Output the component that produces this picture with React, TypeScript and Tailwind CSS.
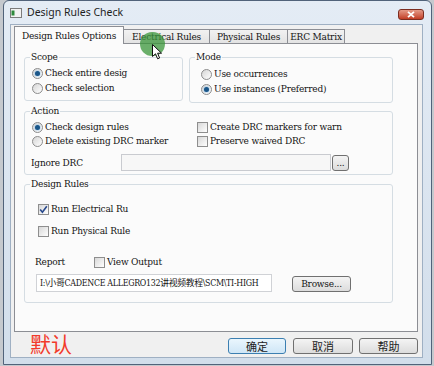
import React from "react";

const serif =
  "font-['DejaVu_Serif_Condensed','DejaVu_Serif','Noto_Sans_CJK_SC',serif] font-stretch-condensed text-[#141414] whitespace-nowrap";
const mono = `${serif} text-[10px] leading-[12px] tracking-[-0.2px]`;
const pathText = `${serif} text-[8.8px] leading-[12px] tracking-[-0.3px]`;
const cjk = "font-['Noto_Sans_CJK_SC',sans-serif]";

function Radio({ checked }: { checked?: boolean }) {
  return (
    <span className="w-[11px] h-[11px] shrink-0 rounded-full border border-[#8c8c8c] bg-linear-to-br from-[#d6d6d6] to-white flex items-center justify-center">
      {checked && <span className="w-[5px] h-[5px] rounded-full bg-[#1b5688] shadow-[0_0_2px_#5aa8e6]" />}
    </span>
  );
}

function Check({ checked }: { checked?: boolean }) {
  return (
    <span className="w-[11px] h-[11px] shrink-0 border border-[#8e8e8e] bg-linear-to-br from-[#d8d8d8] to-white flex items-center justify-center">
      {checked && (
        <svg width="9" height="9" viewBox="0 0 9 9">
          <path d="M1.2 4.6 L3.4 7.2 L7.8 1.2" fill="none" stroke="#27488c" strokeWidth="1.6" />
        </svg>
      )}
    </span>
  );
}

function RadioRow({ label, checked, className = "" }: { label: string; checked?: boolean; className?: string }) {
  return (
    <div className={`h-[14px] flex items-center gap-[2px] ${className}`}>
      <Radio checked={checked} />
      <span className={mono}>{label}</span>
    </div>
  );
}

function CheckRow({ label, checked, className = "" }: { label: string; checked?: boolean; className?: string }) {
  return (
    <div className={`h-[14px] flex items-center gap-[2px] ${className}`}>
      <Check checked={checked} />
      <span className={mono}>{label}</span>
    </div>
  );
}

function Group({ title, className = "", children }: { title: string; className?: string; children: React.ReactNode }) {
  return (
    <fieldset className={`border border-[#d5dde3] rounded-[3px] pl-[5px] ${className}`}>
      <legend className={`px-[1px] ${mono}`}>{title}</legend>
      {children}
    </fieldset>
  );
}

function WinButton({ children, primary, className = "" }: { children: React.ReactNode; primary?: boolean; className?: string }) {
  return (
    <button
      className={`h-[16px] rounded-[3px] border flex items-center justify-center ${
        primary
          ? "border-[#3c7fb1] bg-linear-to-b from-[#eaf6fd] to-[#cfe6f6]"
          : "border-[#707070] bg-linear-to-b from-[#f4f4f4] to-[#dcdcdc]"
      } ${className}`}
    >
      {children}
    </button>
  );
}

export default function App() {
  return (
    <div className="w-[434px] h-[366px] bg-[#c5c9ce] overflow-hidden relative">
      <div className="ml-[3px] w-[429px] h-[365px] border border-[#51637a] rounded-t-[6px] bg-linear-to-b from-[#e4ecf5] to-[#d2deeb] flex flex-col">
        {/* title bar */}
        <div className="h-[23px] flex items-center pl-[6px] pr-[7px]">
          <svg width="12" height="10" viewBox="0 0 12 10">
            <rect x="0.5" y="0.5" width="11" height="9" fill="#f2f2f2" stroke="#7c7c7c" />
            <rect x="1.5" y="2.5" width="3" height="5" fill="#2e8a3c" />
          </svg>
          <span className="ml-[5px] font-['Noto_Sans',sans-serif] text-[10.5px] text-[#1e1e1e]">Design Rules Check</span>
          <div className="ml-auto self-start mt-[8px] w-[26px] h-[11px] rounded-[3px] border border-[#7b2d20] bg-linear-to-b from-[#e49a88] to-[#c13c24] flex items-center justify-center">
            <svg width="8" height="7" viewBox="0 0 8 7">
              <path d="M1 0.8 L7 6.2 M7 0.8 L1 6.2" stroke="#fff" strokeWidth="1.8" />
            </svg>
          </div>
        </div>

        {/* client area */}
        <div className="ml-[6px] w-[413px] flex-1 border border-[#9fb0c3] bg-[#f0f0f0] flex flex-col">
          {/* tabs */}
          <div className="h-[17px] mt-[1px] ml-[3px] flex items-end">
            <div className={`relative z-10 -mb-px w-[110px] h-[18px] border border-b-0 border-[#8c8e94] bg-[#fbfbfb] flex items-center justify-center pt-[1px] ${mono}`}>
              Design Rules Options
            </div>
            <div className={`w-[87px] h-[14px] -ml-px border border-b-0 border-[#8c8e94] bg-linear-to-b from-[#f2f2f2] to-[#e3e3e3] flex items-center justify-center ${mono}`}>
              Electrical Rules
            </div>
            <div className={`w-[79px] h-[14px] -ml-px border border-b-0 border-[#8c8e94] bg-linear-to-b from-[#f2f2f2] to-[#e3e3e3] flex items-center justify-center ${mono}`}>
              Physical Rules
            </div>
            <div className={`w-[58px] h-[14px] -ml-px border border-b-0 border-[#8c8e94] bg-linear-to-b from-[#f2f2f2] to-[#e3e3e3] flex items-center justify-center ${mono}`}>
              ERC Matrix
            </div>
          </div>

          {/* tab panel */}
          <div className="ml-[3px] w-[404px] h-[289px] border border-[#8c8e94] bg-[#fbfbfb] pt-[7px] pl-[9px]">
            <div className="flex items-start gap-[6px]">
              <Group title="Scope" className="w-[159px] pt-[3px] pb-[5px]">
                <div className="flex flex-col gap-[1px] ml-[2px]">
                  <RadioRow label="Check entire desig" checked />
                  <RadioRow label="Check selection" />
                </div>
              </Group>
              <Group title="Mode" className="w-[204px] pt-[4px] pb-[6px]">
                <div className="flex flex-col gap-[1px] ml-[6px]">
                  <RadioRow label="Use occurrences" />
                  <RadioRow label="Use instances (Preferred)" checked />
                </div>
              </Group>
            </div>

            <Group title="Action" className="w-[369px] mt-[2px] pt-[3px] pb-[3px]">
              <div className="flex flex-col ml-[2px]">
                <div className="flex">
                  <RadioRow label="Check design rules" checked className="w-[165px]" />
                  <CheckRow label="Create DRC markers for warn" />
                </div>
                <div className="flex">
                  <RadioRow label="Delete existing DRC marker" className="w-[165px]" />
                  <CheckRow label="Preserve waived DRC" />
                </div>
              </div>
              <div className="flex items-center mt-[6px] ml-[1px]">
                <span className={`w-[90px] ${mono}`}>Ignore DRC</span>
                <div className="w-[210px] h-[17px] border border-[#c9cbd0] bg-[#f7f7f7]" />
                <WinButton className="ml-[1px] w-[17px]">
                  <span className={`${mono} text-[#555] leading-[8px]`}>...</span>
                </WinButton>
              </div>
            </Group>

            <Group title="Design Rules" className="w-[369px] mt-[3px] pt-[12px] pb-[10px]">
              <CheckRow label="Run Electrical Ru" checked className="ml-[8px]" />
              <CheckRow label="Run Physical Rule" className="ml-[8px] mt-[8px]" />
              <div className="h-[14px] mt-[17px] ml-[5px] flex items-center">
                <span className={`w-[59px] ${mono}`}>Report</span>
                <CheckRow label="View Output" />
              </div>
              <div className="flex items-end mt-[5px] ml-[6px]">
                <div className="w-[236px] h-[18px] border border-[#d0d2d6] bg-white flex items-center pl-[3px] overflow-hidden">
                  <span className={pathText}>{"I:\\小哥CADENCE ALLEGRO132讲视频教程\\SCM\\TI-HIGH"}</span>
                </div>
                <WinButton className="ml-[20px] w-[59px]">
                  <span className={mono}>Browse...</span>
                </WinButton>
              </div>
            </Group>
          </div>

          {/* bottom row */}
          <div className="flex-1 flex items-start pl-[19px] pr-[4px]">
            <span className={`${cjk} text-[21px] leading-[21px] mt-[1px] text-[#f23a2a]`}>默认</span>
            <div className="ml-auto mt-[6px] flex">
              <WinButton primary className="w-[58px]">
                <span className={`${cjk} text-[11px] text-[#222]`}>确定</span>
              </WinButton>
              <WinButton className="ml-[7px] w-[60px]">
                <span className={`${cjk} text-[11px] text-[#222]`}>取消</span>
              </WinButton>
              <WinButton className="ml-[6px] w-[59px]">
                <span className={`${cjk} text-[11px] text-[#222]`}>帮助</span>
              </WinButton>
            </div>
          </div>
        </div>
        <div className="h-[6px]" />
      </div>

      {/* cursor highlight overlay */}
      <div className="absolute left-[140px] top-[32px] w-[25px] h-[24px] rounded-full bg-[rgba(58,150,58,0.75)]" />
      <svg className="absolute left-[152px] top-[44px]" width="11" height="16" viewBox="0 0 11 16">
        <path d="M0.5 0.5 L0.5 12.5 L3.5 9.8 L5.6 14.8 L7.6 14 L5.6 9.2 L9.5 9.2 Z" fill="#fff" stroke="#111" strokeWidth="1" />
      </svg>
    </div>
  );
}
